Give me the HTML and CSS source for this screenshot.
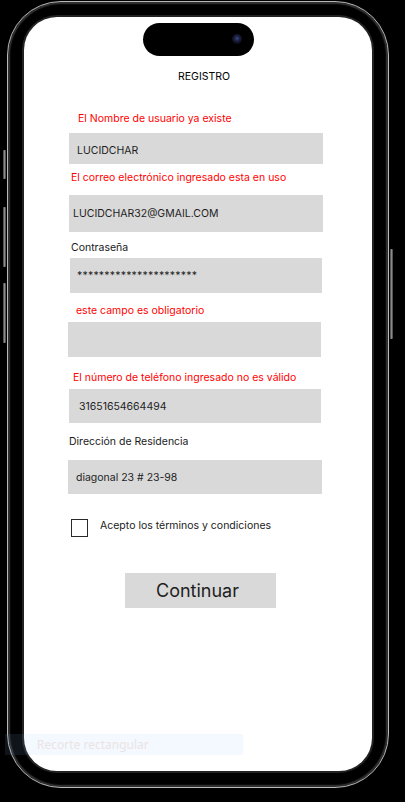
FILE: index.html
```html
<!DOCTYPE html>
<html lang="es">
<head>
<meta charset="utf-8">
<title>Registro</title>
<link rel="stylesheet" href="styles.css">
</head>
<body>
<div class="phone">
  <span class="side side-l1"></span>
  <span class="side side-l2"></span>
  <span class="side side-l3"></span>
  <span class="side side-r1"></span>
  <div class="screen">
    <div class="island"><span class="cam"></span></div>
    <h1 class="title">REGISTRO</h1>
    <form class="form">
      <div class="field f1">
        <p class="msg error">El Nombre de usuario ya existe</p>
        <div class="input">LUCIDCHAR</div>
      </div>
      <div class="field f2">
        <p class="msg error">El correo electrónico ingresado esta en uso</p>
        <div class="input">LUCIDCHAR32@GMAIL.COM</div>
      </div>
      <div class="field f3">
        <p class="msg">Contraseña</p>
        <div class="input pass">**********************</div>
      </div>
      <div class="field f4">
        <p class="msg error">este campo es obligatorio</p>
        <div class="input"></div>
      </div>
      <div class="field f5">
        <p class="msg error">El número de teléfono ingresado no es válido</p>
        <div class="input">31651654664494</div>
      </div>
      <div class="field f6">
        <p class="msg">Dirección de Residencia</p>
        <div class="input">diagonal 23 # 23-98</div>
      </div>
      <label class="terms">
        <span class="box"></span>
        <span class="terms-text">Acepto los términos y condiciones</span>
      </label>
      <div class="button">Continuar</div>
    </form>
  </div>
</div>
<div class="tooltip">Recorte rectangular</div>
</body>
</html>
```

FILE: styles.css
```css
* { box-sizing: border-box; }
html, body { margin: 0; padding: 0; }
body {
  background: #000;
  width: 405px;
  height: 802px;
  overflow: hidden;
  font-family: Inter, "Noto Sans", sans-serif;
  position: relative;
}
.phone {
  position: relative;
  margin: 1px 0 0 7px;
  width: 382px;
  height: 787px;
  border: 1px solid #b9b9b9;
  border-radius: 54px;
  padding: 15px 16px 16px 16px;
  background: #000;
  box-shadow: inset 0 0 0 2px #2e2e2e, inset 0 0 0 3px #0a0a0a;
}
.side {
  position: absolute;
  left: -5px;
  width: 3px;
  background: linear-gradient(90deg, #3c3c3c, #8a8a8a, #3c3c3c);
  border-radius: 1px;
}
.side-l1 { top: 148px; height: 29px; }
.side-l2 { top: 205px; height: 60px; }
.side-l3 { top: 281px; height: 60px; }
.side-r1 { left: auto; right: -5px; top: 247px; height: 90px; }
.screen {
  position: relative;
  width: 348px;
  height: 754px;
  background: #fff;
  border-radius: 33px;
  overflow: hidden;
  box-shadow: 0 0 0 2px #222;
}
.island {
  width: 111px;
  height: 33px;
  margin: 6px 0 0 119px;
  background: #000;
  border-radius: 17px;
  position: relative;
}
.cam {
  position: absolute;
  left: 89px;
  top: 11px;
  width: 10px;
  height: 10px;
  border-radius: 50%;
  background: radial-gradient(circle at 50% 45%, #3a4a8a 0, #1a2040 35%, #0a0c18 70%);
}
.title {
  margin: 14px 0 0 0;
  padding-left: 12px;
  text-align: center;
  font-size: 10.5px;
  font-weight: 400;
  line-height: 14px;
  color: #000;
}
.form {
  margin: 0;
  padding-left: 44px;
  display: flex;
  flex-direction: column;
  align-items: flex-start;
}
.field { display: flex; flex-direction: column; align-items: flex-start; }
.msg {
  margin: 0;
  font-size: 10.5px;
  line-height: 14px;
  color: #1a1a1a;
}
.msg.error { color: #ff0000; }
.input {
  display: flex;
  align-items: center;
  background: #d9d9d9;
  font-size: 10.5px;
  color: #1e1e1e;
  white-space: nowrap;
}
.pass { letter-spacing: 0.2px; }

.f1 { margin-top: 28px; }
.f1 .msg { margin-left: 10px; margin-bottom: 7px; }
.f1 .input { margin-left: 1px; width: 254px; height: 31px; padding-left: 8px; padding-top: 3px; }

.f2 { margin-top: 7px; }
.f2 .msg { margin-left: 3px; margin-bottom: 10px; }
.f2 .input { margin-left: 1px; width: 254px; height: 37px; padding-left: 4px; }

.f3 { margin-top: 9px; }
.f3 .msg { margin-left: 3px; margin-bottom: 3px; }
.f3 .input { margin-left: 2px; width: 252px; height: 35px; padding-left: 7px; }

.f4 { margin-top: 11px; }
.f4 .msg { margin-left: 8px; margin-bottom: 4px; }
.f4 .input { margin-left: 0; width: 253px; height: 35px; }

.f5 { margin-top: 14px; }
.f5 .msg { margin-left: 5px; margin-bottom: 4px; }
.f5 .input { margin-left: 1px; width: 252px; height: 34px; padding-left: 10px; }

.f6 { margin-top: 12px; }
.f6 .msg { margin-left: 1px; margin-bottom: 11px; }
.f6 .input { margin-left: 0; width: 254px; height: 34px; padding-left: 8px; }

.terms {
  margin: 25px 0 0 3px;
  display: flex;
  align-items: flex-start;
  gap: 12px;
}
.box {
  width: 17px;
  height: 18px;
  border: 1.3px solid #2a2a2a;
  background: #fff;
}
.terms-text {
  font-size: 10.5px;
  line-height: 14px;
  color: #1a1a1a;
}
.button {
  margin: 36px 0 0 57px;
  width: 151px;
  height: 35px;
  padding-right: 6px;
  background: #d9d9d9;
  display: flex;
  align-items: center;
  justify-content: center;
  font-size: 18px;
  color: #1e1e1e;
}
.tooltip {
  position: absolute;
  left: 5px;
  top: 734px;
  width: 238px;
  height: 21px;
  padding-left: 32px;
  background: rgba(140, 200, 255, 0.1);
  font-family: "Noto Sans", "Open Sans", sans-serif;
  font-size: 12px;
  line-height: 21px;
  color: #ebe3e3;
}
```
